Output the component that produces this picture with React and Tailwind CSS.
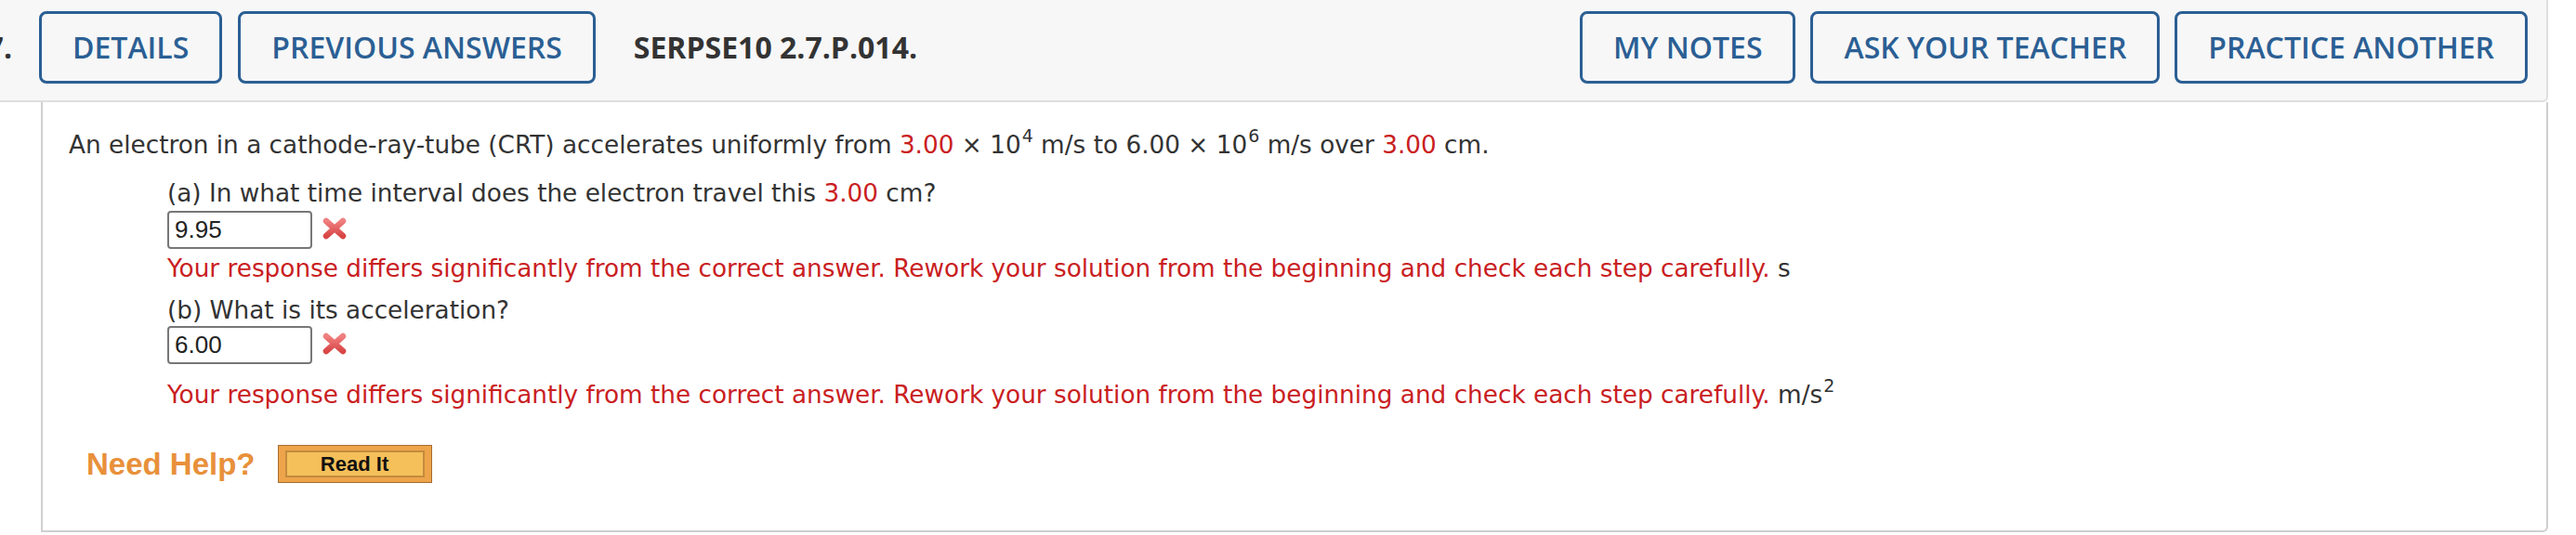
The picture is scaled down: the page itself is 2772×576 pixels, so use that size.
export default function App() {
    const body = { fontFamily: '"DejaVu Sans", Verdana, sans-serif' };
    const head = { fontFamily: '"Open Sans", "Liberation Sans", sans-serif' };
    const arial = { fontFamily: '"Liberation Sans", Arial, sans-serif' };

    const btn =
        "h-[78px] px-[33px] flex items-center border-[3px] border-[#2b5f94] rounded-[8px] text-[32px] font-semibold text-[#2b5f94] leading-none whitespace-nowrap";

    const WrongMark = () => (
        <svg width="28" height="26" viewBox="0 0 28 26" className="ml-[10px] mt-[6px]">
            <defs>
                <linearGradient id="xg" x1="0" y1="0" x2="0" y2="1">
                    <stop offset="0" stopColor="#f08080" />
                    <stop offset="1" stopColor="#d94646" />
                </linearGradient>
            </defs>
            <path d="M5 5 L23 21 M23 5 L5 21" stroke="url(#xg)" strokeWidth="6.5" strokeLinecap="round" fill="none" />
        </svg>
    );

    const Answer = ({ value }) => (
        <div className="flex items-start">
            <div
                className="w-[156px] h-[41px] border-2 border-[#777] rounded-[4px] bg-white flex items-center pl-[6px] text-[26px] text-[#222]"
                style={arial}
            >
                {value}
            </div>
            <WrongMark />
        </div>
    );

    const red = "text-[#c9201f]";
    const sup = "text-[19px] relative -top-[12px] ml-[1px]";

    return (
        <div className="w-[2772px] h-[576px] bg-white overflow-hidden" style={body}>
            {/* header bar */}
            <div
                className="w-[2742px] h-[110px] bg-[#f7f7f7] border-b-2 border-r-2 border-[#dedede] rounded-br-[6px] flex items-start pt-[12px] pr-[20px]"
                style={head}
            >
                <div className="w-[42px] h-[78px] flex items-center justify-end pr-[29px] overflow-visible">
                    <span className="text-[32px] font-bold text-[#333] whitespace-nowrap">7.</span>
                </div>
                <div className="flex gap-[17px]">
                    <button className={btn}>DETAILS</button>
                    <button className={btn}>PREVIOUS ANSWERS</button>
                </div>
                <div className="h-[78px] flex items-center ml-[41px] text-[32px] font-bold text-[#333] whitespace-nowrap">
                    SERPSE10 2.7.P.014.
                </div>
                <div className="ml-auto flex gap-[16px]">
                    <button className={btn}>MY NOTES</button>
                    <button className={btn}>ASK YOUR TEACHER</button>
                    <button className={btn}>PRACTICE ANOTHER</button>
                </div>
            </div>

            {/* question body */}
            <div className="ml-[44px] w-[2698px] h-[463px] border-l-2 border-r-2 border-b-2 border-[#cfcfcf] rounded-br-[6px] pl-[28px] pt-[28px] text-[26.3px] text-[#333]">
                <div className="h-[36px] leading-[36px] whitespace-nowrap">
                    An electron in a cathode-ray-tube (CRT) accelerates uniformly from{" "}
                    <span className={red}>3.00</span> × 10<sup className={sup}>4</sup> m/s to 6.00 × 10
                    <sup className={sup}>6</sup> m/s over <span className={red}>3.00</span> cm.
                </div>

                <div className="ml-[106px]">
                    <div className="mt-[16px] h-[36px] leading-[36px] whitespace-nowrap">
                        (a) In what time interval does the electron travel this <span className={red}>3.00</span> cm?
                    </div>
                    <div className="mt-[1px]">
                        <Answer value="9.95" />
                    </div>
                    <div className="mt-[3px] h-[36px] leading-[36px] whitespace-nowrap">
                        <span className={red}>
                            Your response differs significantly from the correct answer. Rework your solution from the
                            beginning and check each step carefully.
                        </span>{" "}
                        s
                    </div>

                    <div className="mt-[9px] h-[36px] leading-[36px] whitespace-nowrap">(b) What is its acceleration?</div>
                    <div className="mt-[-1px]">
                        <Answer value="6.00" />
                    </div>
                    <div className="mt-[15px] h-[36px] leading-[36px] whitespace-nowrap">
                        <span className={red}>
                            Your response differs significantly from the correct answer. Rework your solution from the
                            beginning and check each step carefully.
                        </span>{" "}
                        m/s<sup className={sup}>2</sup>
                    </div>
                </div>

                <div className="mt-[36px] ml-[19px] flex items-center gap-[24px]" style={arial}>
                    <span className="text-[33px] font-bold text-[#e8903a] leading-none">Need Help?</span>
                    <button className="w-[166px] h-[41px] border border-[#a36d2f] bg-[#eea44a] px-[7px] py-[5px]">
                        <div className="h-full border-2 border-[#c38b3e] bg-[#f5c05a] flex items-center justify-center text-[22px] font-bold text-[#111] leading-none">
                            Read It
                        </div>
                    </button>
                </div>
            </div>
        </div>
    );
}
